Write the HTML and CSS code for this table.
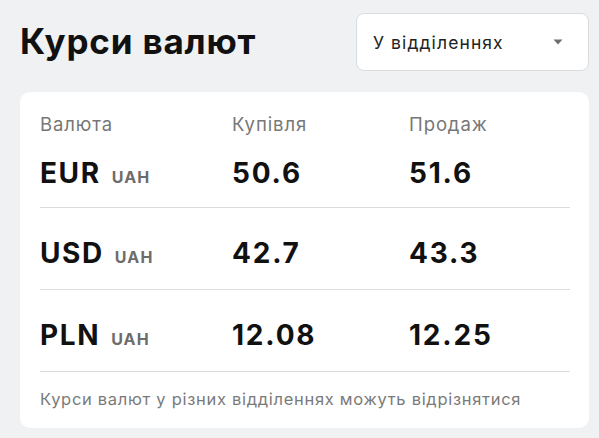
FILE: index.html
```html
<!DOCTYPE html>
<html lang="uk">
<head>
<meta charset="utf-8">
<title>Курси валют</title>
<link rel="stylesheet" href="styles.css">
</head>
<body>
<div class="page">
  <header class="top">
    <h1 class="title">Курси валют</h1>
    <div class="select">
      <span class="select-text">У відділеннях</span>
      <svg class="caret" width="10" height="6" viewBox="0 0 10 6"><path d="M0.5 0.5h9L5 5.5z" fill="#6f6f6f"/></svg>
    </div>
  </header>
  <section class="card">
    <div class="row head">
      <span class="c1">Валюта</span>
      <span class="c2">Купівля</span>
      <span class="c3">Продаж</span>
    </div>
    <div class="row data first">
      <span class="c1"><b class="code">EUR</b><span class="base">UAH</span></span>
      <span class="c2 num">50.6</span>
      <span class="c3 num">51.6</span>
    </div>
    <div class="row data">
      <span class="c1"><b class="code">USD</b><span class="base">UAH</span></span>
      <span class="c2 num">42.7</span>
      <span class="c3 num">43.3</span>
    </div>
    <div class="row data">
      <span class="c1"><b class="code">PLN</b><span class="base">UAH</span></span>
      <span class="c2 num">12.08</span>
      <span class="c3 num">12.25</span>
    </div>
    <p class="note">Курси валют у різних відділеннях можуть відрізнятися</p>
  </section>
</div>
</body>
</html>
```
FILE: styles.css
```css
html, body {
  margin: 0;
  padding: 0;
  background: #eff1f3;
}
body {
  font-family: Inter, "Noto Sans", sans-serif;
  color: #111;
}
.page {
  padding: 13px 10px 0 20px;
  width: 569px;
}
.top {
  display: flex;
  justify-content: space-between;
  align-items: center;
  height: 58px;
}
.title {
  margin: 0;
  font-size: 35px;
  font-weight: 700;
  letter-spacing: 0.8px;
  color: #111;
  position: relative;
  top: -1px;
}
.select {
  box-sizing: border-box;
  width: 233px;
  height: 58px;
  background: #fff;
  border: 1px solid #d9dcdf;
  border-radius: 8px;
  display: flex;
  align-items: center;
  justify-content: space-between;
  padding: 0 25px 0 16px;
}
.select-text {
  font-size: 17.5px;
  letter-spacing: 1.1px;
  color: #222;
}
.caret {
  display: block;
}
.card {
  margin-top: 21px;
  background: #fff;
  border-radius: 10px;
  padding: 12px 19px 16px 20px;
  height: 308px;
}
.row {
  display: grid;
  grid-template-columns: 192px 177px 1fr;
  align-items: center;
}
.head {
  height: 40px;
  color: #777;
  font-size: 18.5px;
  letter-spacing: 0.9px;
}
.data {
  box-sizing: border-box;
  height: 82px;
  padding-top: 8px;
  border-bottom: 1px solid #dcdcdc;
}
.data.first {
  height: 64px;
  padding-top: 0;
  padding-bottom: 6px;
}
.code {
  font-size: 28px;
  font-weight: 700;
  letter-spacing: 1.6px;
}
.base {
  font-size: 16px;
  font-weight: 700;
  color: #6c6c6c;
  letter-spacing: 1.1px;
  margin-left: 11px;
}
.num {
  font-size: 28px;
  font-weight: 700;
  letter-spacing: 1.8px;
}
.note {
  margin: 17px 0 0;
  font-size: 16.5px;
  color: #7a7a7a;
  letter-spacing: 0.7px;
}
```
